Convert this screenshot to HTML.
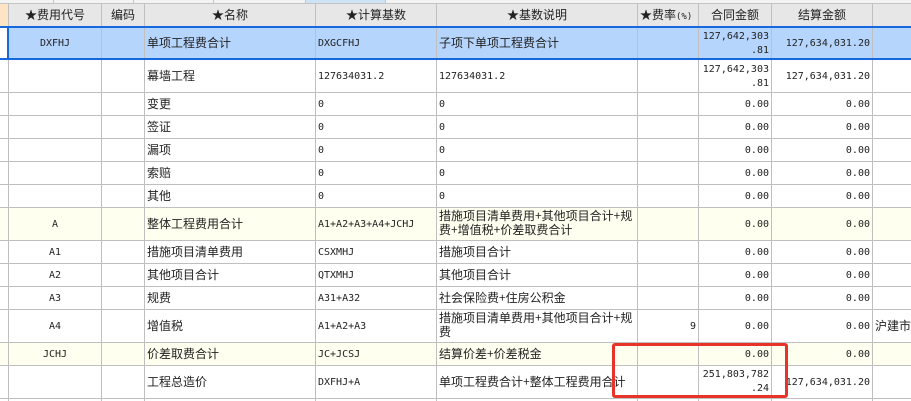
<!DOCTYPE html>
<html><head><meta charset="utf-8"><style>
html,body{margin:0;padding:0;background:#fff}
#p{position:relative;width:911px;height:401px;overflow:hidden;background:#fff;font:12px/14px "WenQuanYi Zen Hei","Noto Sans CJK SC",sans-serif;color:#222}
#p div{position:absolute}
.t{white-space:pre}
.m{font-family:"DejaVu Sans Mono","Liberation Mono",monospace;font-size:10px;white-space:pre;margin-top:1px}
.c{text-align:center}
.r{text-align:right}
.v{background:#bfbfbf;width:1px}
.h{background:#bfbfbf;height:1px;left:0;width:911px}
</style></head><body><div id="p">
<div style="left:0;top:0;width:911px;height:3px;background:#f3f3f3"></div>
<div style="left:306px;top:0;width:80px;height:3px;background:#cfe3f7"></div>
<div style="left:53px;top:0;width:1px;height:3px;background:#c4c4c4"></div>
<div style="left:133px;top:0;width:1px;height:3px;background:#c4c4c4"></div>
<div style="left:213px;top:0;width:1px;height:3px;background:#c4c4c4"></div>
<div style="left:305px;top:0;width:1px;height:3px;background:#c4c4c4"></div>
<div style="left:385px;top:0;width:1px;height:3px;background:#c4c4c4"></div>
<div style="left:0;top:3px;width:911px;height:23px;background:#e7e7e7"></div>
<div style="left:0;top:3px;width:8px;height:23px;background:#fde4c4"></div>
<div style="left:0;top:3px;width:911px;height:1px;background:#c4c4c4"></div>

<div style="left:0;top:207px;width:911px;height:33px;background:#fffff0"></div>
<div style="left:0;top:342px;width:911px;height:23px;background:#fffff0"></div>
<div style="left:8px;top:27px;width:903px;height:32px;background:#b5d5fd"></div>

<div class="h" style="top:92px"></div><div class="h" style="top:115px"></div><div class="h" style="top:138px"></div><div class="h" style="top:161px"></div><div class="h" style="top:184px"></div><div class="h" style="top:207px"></div><div class="h" style="top:240px"></div><div class="h" style="top:263px"></div><div class="h" style="top:286px"></div><div class="h" style="top:309px"></div><div class="h" style="top:342px"></div><div class="h" style="top:365px"></div><div class="h" style="top:398px"></div>

<div class="v" style="left:8px;top:3px;height:398px"></div><div class="v" style="left:101px;top:3px;height:398px"></div><div class="v" style="left:144px;top:3px;height:398px"></div><div class="v" style="left:315px;top:3px;height:398px"></div><div class="v" style="left:436px;top:3px;height:398px"></div><div class="v" style="left:637px;top:3px;height:398px"></div><div class="v" style="left:698px;top:3px;height:398px"></div><div class="v" style="left:771px;top:3px;height:398px"></div><div class="v" style="left:872px;top:3px;height:398px"></div>

<div style="left:0;top:26px;width:911px;height:2px;background:#1668dc"></div>
<div style="left:0;top:58px;width:911px;height:2px;background:#1668dc"></div>
<div style="left:7px;top:26px;width:2px;height:34px;background:#1668dc"></div>

<div class="t c" style="left:9px;top:8px;width:92px">★费用代号</div>
<div class="t c" style="left:102px;top:8px;width:42px">编码</div>
<div class="t c" style="left:145px;top:8px;width:170px">★名称</div>
<div class="t c" style="left:316px;top:8px;width:120px">★计算基数</div>
<div class="t c" style="left:437px;top:8px;width:200px">★基数说明</div>
<div class="t" style="left:640px;top:8px">★费率<span style="font-family:'DejaVu Sans Mono',monospace;font-size:9px">(%)</span></div>
<div class="t c" style="left:699px;top:8px;width:72px">合同金额</div>
<div class="t c" style="left:772px;top:8px;width:100px">结算金额</div>

<div class="m c" style="left:9px;top:36px;width:92px">DXFHJ</div>
<div class="t" style="left:147px;top:36px">单项工程费合计</div>
<div class="m" style="left:318px;top:36px">DXGCFHJ</div>
<div class="t" style="left:439px;top:36px">子项下单项工程费合计</div>
<div class="m r" style="left:690px;top:29px;width:79px">127,642,303
.81</div>
<div class="m r" style="left:772px;top:36px;width:98px">127,634,031.20</div>

<div class="t" style="left:147px;top:69px">幕墙工程</div>
<div class="m" style="left:318px;top:69px">127634031.2</div>
<div class="m" style="left:439px;top:69px">127634031.2</div>
<div class="m r" style="left:690px;top:62px;width:79px">127,642,303
.81</div>
<div class="m r" style="left:772px;top:69px;width:98px">127,634,031.20</div>

<div class="t" style="left:147px;top:97px">变更</div><div class="m" style="left:318px;top:97px">0</div><div class="m" style="left:439px;top:97px">0</div><div class="m r" style="left:699px;top:97px;width:70px">0.00</div><div class="m r" style="left:772px;top:97px;width:98px">0.00</div>
<div class="t" style="left:147px;top:120px">签证</div><div class="m" style="left:318px;top:120px">0</div><div class="m" style="left:439px;top:120px">0</div><div class="m r" style="left:699px;top:120px;width:70px">0.00</div><div class="m r" style="left:772px;top:120px;width:98px">0.00</div>
<div class="t" style="left:147px;top:143px">漏项</div><div class="m" style="left:318px;top:143px">0</div><div class="m" style="left:439px;top:143px">0</div><div class="m r" style="left:699px;top:143px;width:70px">0.00</div><div class="m r" style="left:772px;top:143px;width:98px">0.00</div>
<div class="t" style="left:147px;top:166px">索赔</div><div class="m" style="left:318px;top:166px">0</div><div class="m" style="left:439px;top:166px">0</div><div class="m r" style="left:699px;top:166px;width:70px">0.00</div><div class="m r" style="left:772px;top:166px;width:98px">0.00</div>
<div class="t" style="left:147px;top:189px">其他</div><div class="m" style="left:318px;top:189px">0</div><div class="m" style="left:439px;top:189px">0</div><div class="m r" style="left:699px;top:189px;width:70px">0.00</div><div class="m r" style="left:772px;top:189px;width:98px">0.00</div>

<div class="m c" style="left:9px;top:217px;width:92px">A</div>
<div class="t" style="left:147px;top:217px">整体工程费用合计</div>
<div class="m" style="left:318px;top:217px">A1+A2+A3+A4+JCHJ</div>
<div class="t" style="left:439px;top:209px">措施项目清单费用+其他项目合计+规
费+增值税+价差取费合计</div>
<div class="m r" style="left:699px;top:217px;width:70px">0.00</div><div class="m r" style="left:772px;top:217px;width:98px">0.00</div>

<div class="m c" style="left:9px;top:245px;width:92px">A1</div>
<div class="t" style="left:147px;top:245px">措施项目清单费用</div>
<div class="m" style="left:318px;top:245px">CSXMHJ</div>
<div class="t" style="left:439px;top:245px">措施项目合计</div>
<div class="m r" style="left:699px;top:245px;width:70px">0.00</div><div class="m r" style="left:772px;top:245px;width:98px">0.00</div>

<div class="m c" style="left:9px;top:268px;width:92px">A2</div>
<div class="t" style="left:147px;top:268px">其他项目合计</div>
<div class="m" style="left:318px;top:268px">QTXMHJ</div>
<div class="t" style="left:439px;top:268px">其他项目合计</div>
<div class="m r" style="left:699px;top:268px;width:70px">0.00</div><div class="m r" style="left:772px;top:268px;width:98px">0.00</div>

<div class="m c" style="left:9px;top:291px;width:92px">A3</div>
<div class="t" style="left:147px;top:291px">规费</div>
<div class="m" style="left:318px;top:291px">A31+A32</div>
<div class="t" style="left:439px;top:291px">社会保险费+住房公积金</div>
<div class="m r" style="left:699px;top:291px;width:70px">0.00</div><div class="m r" style="left:772px;top:291px;width:98px">0.00</div>

<div class="m c" style="left:9px;top:319px;width:92px">A4</div>
<div class="t" style="left:147px;top:319px">增值税</div>
<div class="m" style="left:318px;top:319px">A1+A2+A3</div>
<div class="t" style="left:439px;top:311px">措施项目清单费用+其他项目合计+规
费</div>
<div class="m r" style="left:638px;top:319px;width:58px">9</div>
<div class="m r" style="left:699px;top:319px;width:70px">0.00</div><div class="m r" style="left:772px;top:319px;width:98px">0.00</div>
<div class="t" style="left:875px;top:319px;width:36px;overflow:hidden">沪建市</div>

<div class="m c" style="left:9px;top:347px;width:92px">JCHJ</div>
<div class="t" style="left:147px;top:347px">价差取费合计</div>
<div class="m" style="left:318px;top:347px">JC+JCSJ</div>
<div class="t" style="left:439px;top:347px">结算价差+价差税金</div>
<div class="m r" style="left:699px;top:347px;width:70px">0.00</div><div class="m r" style="left:772px;top:347px;width:98px">0.00</div>

<div class="t" style="left:147px;top:375px">工程总造价</div>
<div class="m" style="left:318px;top:375px">DXFHJ+A</div>
<div class="t" style="left:439px;top:375px">单项工程费合计+整体工程费用合计</div>
<div class="m r" style="left:690px;top:367px;width:79px">251,803,782
.24</div>
<div class="m r" style="left:772px;top:375px;width:98px">127,634,031.20</div>

<div style="left:612px;top:343px;width:170px;height:49px;border:3px solid #e8332a;border-radius:3px"></div>
</div></body></html>
